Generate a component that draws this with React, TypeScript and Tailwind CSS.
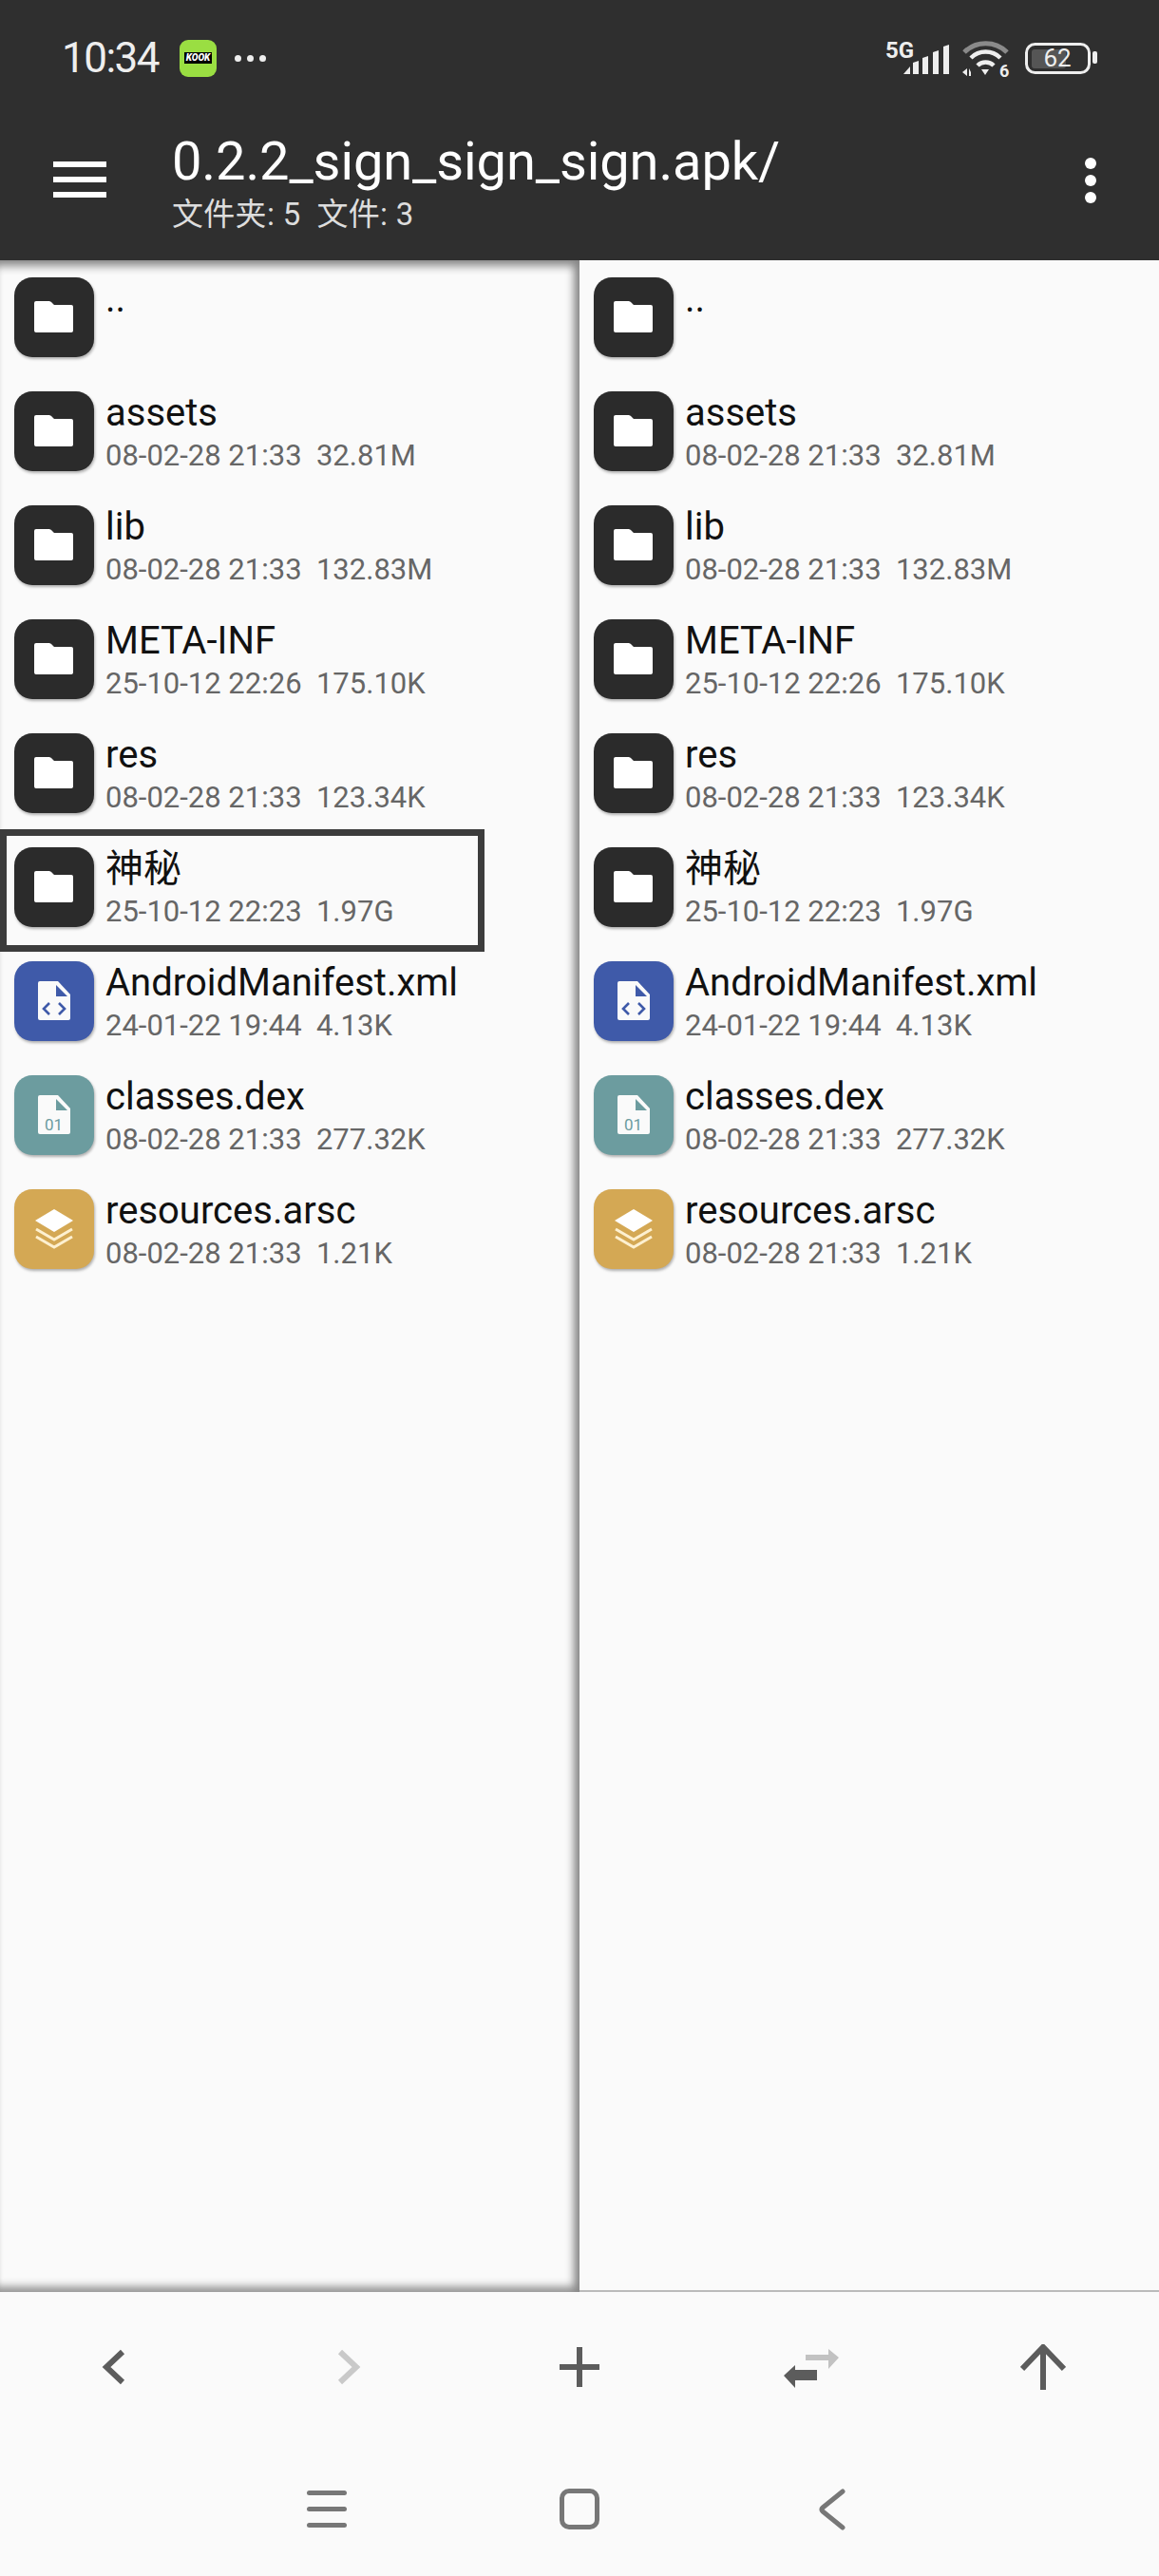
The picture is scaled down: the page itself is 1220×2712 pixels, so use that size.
import React from "react";

const sans = "font-['Roboto','Noto_Sans_CJK_SC',sans-serif]";

type Kind = "folder" | "xml" | "dex" | "arsc";

interface Entry {
  name: string;
  meta?: string;
  kind: Kind;
}

const entries: Entry[] = [
  { name: "..", kind: "folder" },
  { name: "assets", meta: "08-02-28 21:33  32.81M", kind: "folder" },
  { name: "lib", meta: "08-02-28 21:33  132.83M", kind: "folder" },
  { name: "META-INF", meta: "25-10-12 22:26  175.10K", kind: "folder" },
  { name: "res", meta: "08-02-28 21:33  123.34K", kind: "folder" },
  { name: "神秘", meta: "25-10-12 22:23  1.97G", kind: "folder" },
  { name: "AndroidManifest.xml", meta: "24-01-22 19:44  4.13K", kind: "xml" },
  { name: "classes.dex", meta: "08-02-28 21:33  277.32K", kind: "dex" },
  { name: "resources.arsc", meta: "08-02-28 21:33  1.21K", kind: "arsc" },
];

const tileColor: Record<Kind, string> = {
  folder: "bg-[#2b2b2b]",
  xml: "bg-[#3f5aa9]",
  dex: "bg-[#6c9c9f]",
  arsc: "bg-[#d4a854]",
};

const FileSheet: React.FC<{ fold: string; children: React.ReactNode }> = ({ fold, children }) => (
  <svg viewBox="0 0 84 84" className="h-[84px] w-[84px]">
    <path d="M27 21h19l13 14v25a2 2 0 0 1-2 2H27a2 2 0 0 1-2-2V23a2 2 0 0 1 2-2z" fill="#fafafa" />
    <path d="M44 25l12 12H44z" fill={fold} />
    {children}
  </svg>
);

const TileIcon: React.FC<{ kind: Kind }> = ({ kind }) => {
  if (kind === "folder") {
    return (
      <svg viewBox="0 0 84 84" className="h-[84px] w-[84px]">
        <path
          d="M23 25h13c1.500 0 2.500.5 3.500 1.500l2.500 2.500h18a2 2 0 0 1 2 2v25a2 2 0 0 1-2 2H23a2 2 0 0 1-2-2V27a2 2 0 0 1 2-2z"
          fill="#fff"
        />
      </svg>
    );
  }
  if (kind === "xml") {
    return (
      <FileSheet fold="#3f5aa9">
        <path d="M37 44l-6 6 6 6M47 44l6 6-6 6" fill="none" stroke="#3f5aa9" strokeWidth="2.600" />
      </FileSheet>
    );
  }
  if (kind === "dex") {
    return (
      <FileSheet fold="#6c9c9f">
        <text x="41.500" y="58" textAnchor="middle" fontSize="17" fontFamily="Roboto" fill="#6c9c9f">
          01
        </text>
      </FileSheet>
    );
  }
  return (
    <svg viewBox="0 0 84 84" className="h-[84px] w-[84px]">
      <path d="M42 21l20 12-20 12-20-12z" fill="#fff" />
      <path d="M23 42l19 11 19-11M23 50l19 11 19-11" fill="none" stroke="#fdf0d0" strokeWidth="3" />
    </svg>
  );
};

const FileRow: React.FC<{ entry: Entry; selected?: boolean }> = ({ entry, selected }) => (
  <div className="relative flex h-[120px] items-start gap-[12px] pl-[15px] pt-[12px]">
    {selected && <div className="absolute left-0 top-[-7px] h-[129px] w-[510px] border-[7px] border-[#3c3c3c]" />}
    <div className={`h-[84px] w-[84px] shrink-0 rounded-[19px] shadow-[1px_2px_3px_rgba(0,0,0,0.3)] ${tileColor[entry.kind]}`}>
      <TileIcon kind={entry.kind} />
    </div>
    <div className="min-w-0">
      <div className="h-[50px] text-[40px] leading-[46px] text-[#111]">{entry.name}</div>
      {entry.meta && <div className="whitespace-pre text-[31px] leading-[36px] text-[#666]">{entry.meta}</div>}
    </div>
  </div>
);

const Pane: React.FC<{ active?: boolean }> = ({ active }) => (
  <div
    className={`min-w-0 flex-1 pt-[6px] ${
      active ? "shadow-[inset_0_13px_10px_-7px_#888,inset_-11px_0_9px_-5px_#888,inset_0_-12px_9px_-6px_#999]" : "border-b-2 border-[#bbb]"
    }`}
  >
    {entries.map((entry) => (
      <FileRow key={entry.name} entry={entry} selected={active && entry.name === "神秘"} />
    ))}
  </div>
);

const StatusIcons = () => (
  <svg viewBox="0 0 230 50" className="mt-[6px] h-[50px] w-[230px]">
    <text x="0" y="22" fontSize="24" fontWeight="700" fontFamily="Roboto" fill="#eee">
      5G
    </text>
    <path d="M19 39l7-8v8zM29 27l6-2v14h-6zM39 22l6-2v19h-6zM50 16l6-2v25h-6zM61 10l6-2v31h-6z" fill="#eee" />
    <path d="M83 16a32 32 0 0 1 45 0" fill="none" stroke="#8a8a8a" strokeWidth="5" />
    <path d="M90 22a22 22 0 0 1 31 0M97 30a12 12 0 0 1 17 0" fill="none" stroke="#eee" strokeWidth="4.500" />
    <path d="M101 34h8l-4 6z" fill="#eee" />
    <path d="M86 33v8l-5-4zM88 33v8h2v-4z" fill="#eee" />
    <text x="120" y="42" fontSize="18" fontWeight="700" fontFamily="Roboto" fill="#eee">
      6
    </text>
    <rect x="148.500" y="7.500" width="66" height="30" rx="9" fill="none" stroke="#eee" strokeWidth="3" />
    <rect x="154" y="13" width="36" height="20" rx="3" fill="#555" />
    <text x="181" y="31" textAnchor="middle" fontSize="26" fontFamily="Roboto" fill="#eee">
      62
    </text>
    <rect x="218" y="15" width="5" height="13" rx="2" fill="#eee" />
  </svg>
);

const Toolbar = () => (
  <div className="grid h-[158px] grid-cols-5 place-items-center">
    <svg viewBox="0 0 40 50" className="h-[50px] w-[40px]">
      <path d="M28 9L11 25l17 16" transform="translate(-1 0)" fill="none" stroke="#5c5c5c" strokeWidth="6" strokeLinejoin="miter" />
    </svg>
    <svg viewBox="0 0 40 50" className="h-[50px] w-[40px]">
      <path d="M12 9l17 16-17 16" fill="none" stroke="#c9c9c9" strokeWidth="6" />
    </svg>
    <svg viewBox="0 0 42 42" className="h-[42px] w-[42px]">
      <path d="M21 0v42M0 21h42" stroke="#5c5c5c" strokeWidth="6" />
    </svg>
    <svg viewBox="0 0 58 44" className="h-[44px] w-[58px]">
      <path d="M23 9h24V3l11 9-11 12v-9H23z" fill="#c2c2c2" />
      <path d="M35 25H12v-5L0 31l12 13v-8h23z" fill="#5c5c5c" />
    </svg>
    <svg viewBox="0 0 48 48" className="h-[48px] w-[48px]">
      <path d="M24 48V4M2 26L24 3l22 23" fill="none" stroke="#5c5c5c" strokeWidth="6" />
    </svg>
  </div>
);

const NavBar = () => (
  <div className="flex flex-1 items-center justify-center">
    <div className="flex w-[266px] justify-center">
      <div className="flex w-[42px] flex-col gap-[12px]">
        <div className="h-[5px] rounded-full bg-[#777]" />
        <div className="h-[5px] rounded-full bg-[#777]" />
        <div className="h-[5px] rounded-full bg-[#777]" />
      </div>
    </div>
    <div className="flex w-[266px] justify-center">
      <div className="h-[43px] w-[42px] rounded-[10px] border-[5px] border-[#777]" />
    </div>
    <div className="flex w-[266px] justify-center">
      <svg viewBox="0 0 28 44" className="h-[44px] w-[28px]">
        <path d="M25 3L4 20c-1.500 1.200-1.500 2.800 0 4l21 17" fill="none" stroke="#777" strokeWidth="5" strokeLinecap="round" />
      </svg>
    </div>
  </div>
);

export default function App() {
  return (
    <div className={`flex h-[2712px] w-[1220px] flex-col overflow-hidden bg-[#fafafa] ${sans}`}>
      <header className="h-[274px] shrink-0 bg-[#2f2f2f]">
        <div className="flex h-[122px] items-center justify-between pl-[65px] pr-[58px]">
          <div className="flex items-center">
            <span className="w-[124px] text-[44px] leading-none tracking-[-1.500px] text-[#eee]">10:34</span>
            <div className="flex h-[39px] w-[39px] flex-col items-center justify-center rounded-[9px] bg-[#9ade42]">
              <span className="bg-black px-[2px] text-[10px] font-black italic leading-[12px] text-white">KOOK</span>
            </div>
            <div className="ml-[19px] flex gap-[6px]">
              <div className="h-[7px] w-[7px] rounded-full bg-[#eee]" />
              <div className="h-[7px] w-[7px] rounded-full bg-[#eee]" />
              <div className="h-[7px] w-[7px] rounded-full bg-[#eee]" />
            </div>
          </div>
          <StatusIcons />
        </div>
        <div className="flex h-[152px] items-start">
          <div className="ml-[56px] mt-[48px] flex w-[56px] flex-col gap-[10px]">
            <div className="h-[6px] bg-white" />
            <div className="h-[6px] bg-white" />
            <div className="h-[6px] bg-white" />
          </div>
          <div className="ml-[69px] min-w-0 flex-1 pt-[16px]">
            <div className="text-[56px] leading-[64px] tracking-[-0.100px] text-white">0.2.2_sign_sign_sign.apk/</div>
            <div className="mt-[5px] whitespace-pre text-[33px] leading-[38px] tracking-[0.300px] text-[#ddd]">文件夹: 5  文件: 3</div>
          </div>
          <div className="mr-[66px] mt-[44px] flex flex-col gap-[6px]">
            <div className="h-[12px] w-[12px] rounded-full bg-white" />
            <div className="h-[12px] w-[12px] rounded-full bg-white" />
            <div className="h-[12px] w-[12px] rounded-full bg-white" />
          </div>
        </div>
      </header>
      <div className="flex h-[2139px] shrink-0">
        <Pane active />
        <Pane />
      </div>
      <Toolbar />
      <NavBar />
    </div>
  );
}
